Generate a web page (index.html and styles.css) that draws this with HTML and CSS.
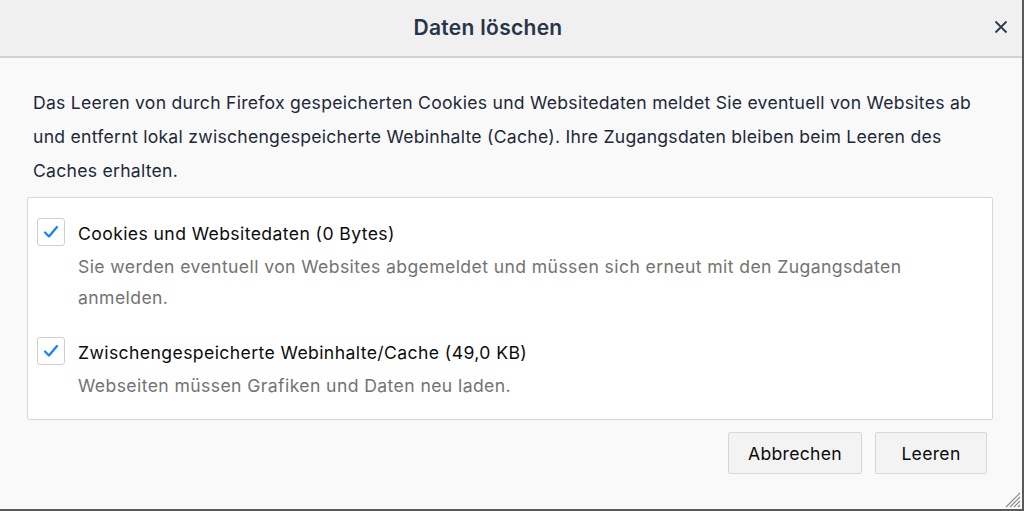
FILE: index.html
```html
<!DOCTYPE html>
<html lang="de">
<head>
    <meta charset="UTF-8">
    <title>Daten löschen</title>
    <link rel="stylesheet" href="styles.css">
</head>
<body>
    <div id="dialog">
        <div id="header">
            <h1>Daten löschen</h1>
            <button id="close" aria-label="Schließen">
                <svg width="14" height="14" viewBox="0 0 14 14"><path d="M1.5 1.5 L12.5 12.5 M12.5 1.5 L1.5 12.5" stroke="#2c3a4b" stroke-width="1.8" fill="none"/></svg>
            </button>
        </div>
        <div id="content">
            <p class="intro">Das Leeren von durch Firefox gespeicherten Cookies und Websitedaten meldet Sie eventuell von Websites ab und entfernt lokal zwischengespeicherte Webinhalte (Cache). Ihre Zugangsdaten bleiben beim Leeren des Caches erhalten.</p>
            <div id="options">
                <div class="option">
                    <span class="check">
                        <svg width="16" height="14" viewBox="0 0 16 14"><path d="M2 7.5 L6 11.5 L14 2" stroke="#0a84ff" stroke-width="2.2" fill="none" stroke-linecap="round" stroke-linejoin="round"/></svg>
                    </span>
                    <div class="option-text">
                        <div class="label">Cookies und Websitedaten (0 Bytes)</div>
                        <div class="desc">Sie werden eventuell von Websites abgemeldet und müssen sich erneut mit den Zugangsdaten anmelden.</div>
                    </div>
                </div>
                <div class="option">
                    <span class="check">
                        <svg width="16" height="14" viewBox="0 0 16 14"><path d="M2 7.5 L6 11.5 L14 2" stroke="#0a84ff" stroke-width="2.2" fill="none" stroke-linecap="round" stroke-linejoin="round"/></svg>
                    </span>
                    <div class="option-text">
                        <div class="label">Zwischengespeicherte Webinhalte/Cache (49,0 KB)</div>
                        <div class="desc">Webseiten müssen Grafiken und Daten neu laden.</div>
                    </div>
                </div>
            </div>
            <div id="buttons">
                <button class="btn abbrechen">Abbrechen</button>
                <button class="btn leeren">Leeren</button>
            </div>
        </div>
        <svg id="grip" width="18" height="18" viewBox="0 0 18 18">
            <path d="M17 3 L3 17 M17 7 L7 17 M17 11 L11 17 M17 15 L15 17" stroke="#8a8a8a" stroke-width="1.2" fill="none"/>
        </svg>
    </div>
</body>
</html>
```

FILE: styles.css
```css
* {
    box-sizing: border-box;
}

html, body {
    margin: 0;
    height: 100%;
}

body {
    font-family: Inter, "Noto Sans", sans-serif;
    background-color: #f9f9fa;
    overflow: hidden;
}

#dialog {
    position: relative;
    height: 511px;
    width: 1024px;
    border-right: 2px solid #5a5a5a;
    border-bottom: 2px solid #5a5a5a;
    background-color: #f9f9fa;
}

#header {
    position: relative;
    height: 58px;
    background-color: #f0f0f0;
    border-bottom: 2px solid #d2d2d2;
    display: flex;
    align-items: center;
    justify-content: center;
    padding-right: 46px;
}

#header h1 {
    margin: 0 0 1px;
    font-size: 21px;
    font-weight: 600;
    color: #253547;
    letter-spacing: 0.3px;
}

#close {
    position: absolute;
    right: 14px;
    top: 20px;
    padding: 0;
    border: none;
    background: none;
    width: 14px;
    height: 14px;
}

#content {
    padding: 28px 29px 0 27px;
}

.intro {
    margin: 0 0 9px 6px;
    font-size: 17.6px;
    line-height: 34px;
    letter-spacing: 0.26px;
    color: #1d2839;
}

#options {
    background-color: #fff;
    border: 1px solid #d7d7db;
    border-radius: 2px;
    padding: 20px 9px 15px;
    height: 223px;
}

.option {
    display: flex;
    align-items: flex-start;
    margin-bottom: 24px;
}

.check {
    width: 28px;
    height: 28px;
    border: 1px solid #d0d0d4;
    border-radius: 3px;
    background-color: #fff;
    display: flex;
    align-items: center;
    justify-content: center;
    margin-right: 13px;
    flex-shrink: 0;
}

.label {
    font-size: 17.6px;
    line-height: 30px;
    letter-spacing: 0.4px;
    color: #0c0c0d;
    margin-top: 1px;
}

.desc {
    font-size: 17.6px;
    line-height: 31px;
    letter-spacing: 0.4px;
    color: #737373;
    margin-top: 2px;
}

#buttons {
    display: flex;
    justify-content: flex-end;
    gap: 13px;
    margin-top: 12px;
    padding-right: 6px;
}

.btn {
    height: 42px;
    font-family: inherit;
    font-size: 17.6px;
    letter-spacing: 0.3px;
    color: #0c0c0d;
    background-color: #f3f3f3;
    border: 1px solid #d7d7d7;
    border-radius: 2px;
}

.abbrechen {
    width: 134px;
}

.leeren {
    width: 112px;
}

#grip {
    position: absolute;
    right: 1px;
    bottom: 1px;
}
```
